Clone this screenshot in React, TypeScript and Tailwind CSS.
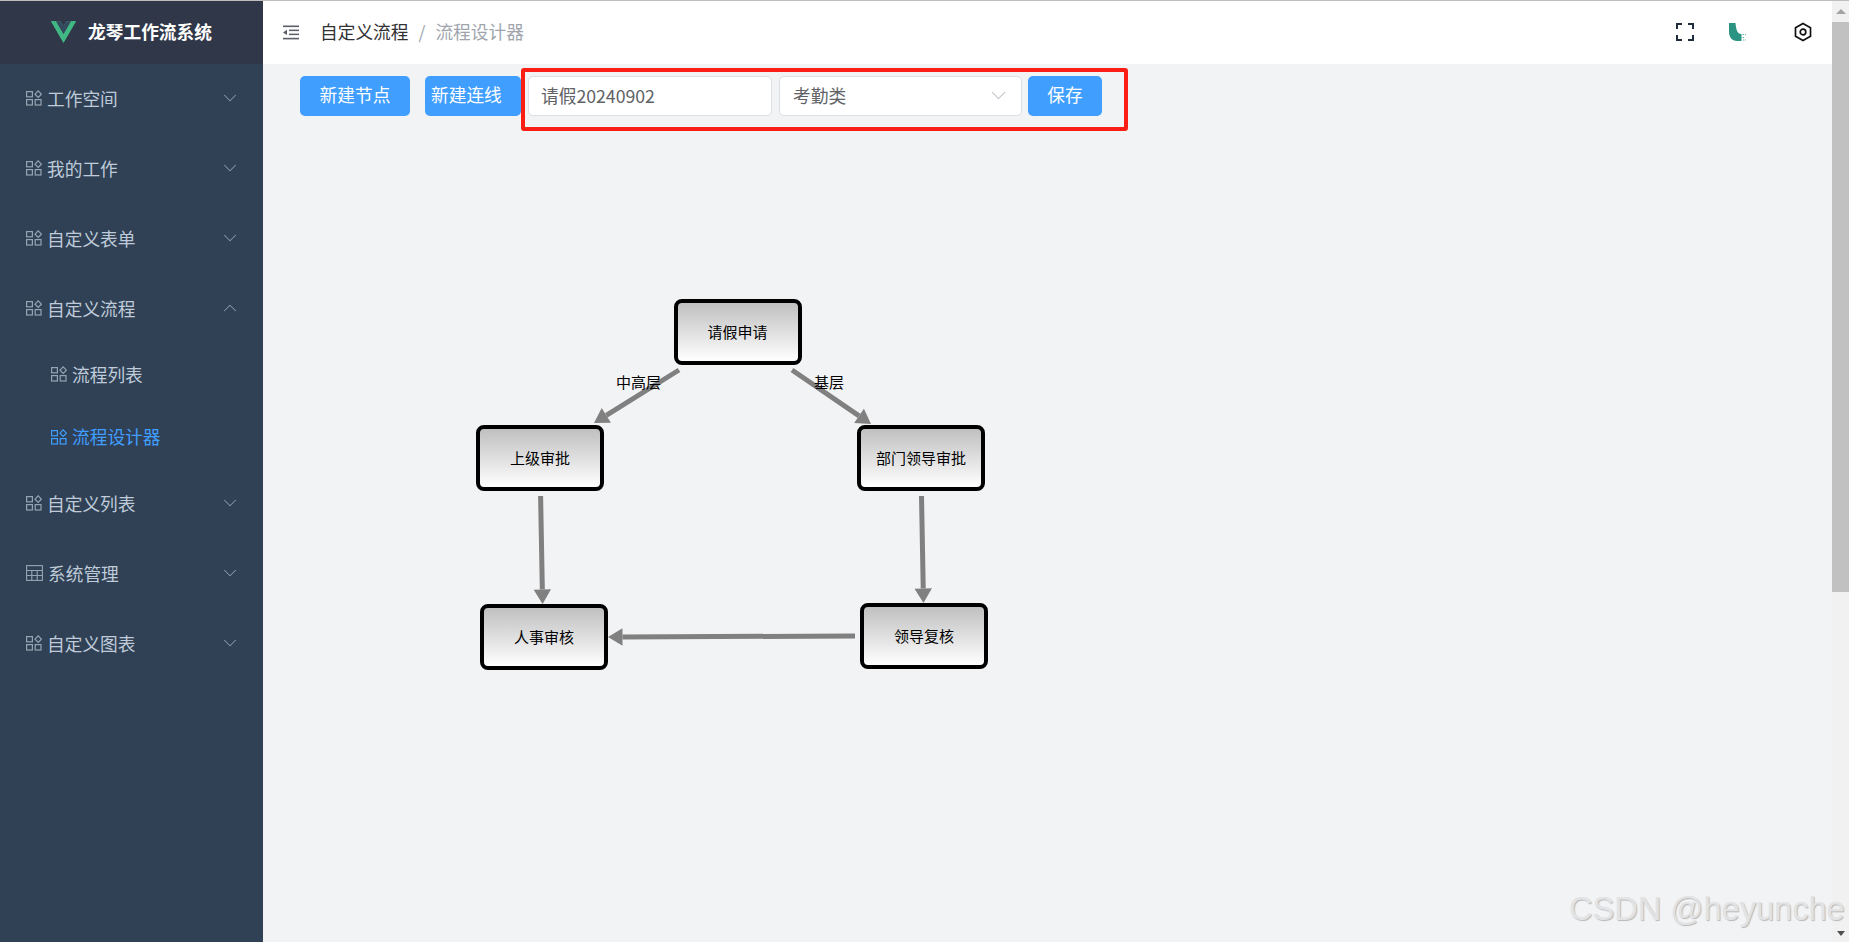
import { ChevronDown, ChevronUp } from "lucide-react";

const FONT = "font-['Microsoft_YaHei','Noto_Sans_CJK_SC','Liberation_Sans',sans-serif]";

function GridIcon({ className }: { className?: string }) {
  return (
    <svg viewBox="0 0 16 16" fill="none" stroke="currentColor" strokeWidth="1.2" className={className}>
      <rect x="0.6" y="1.6" width="5.8" height="5.2" />
      <rect x="0.6" y="9.6" width="5.8" height="5.4" />
      <rect x="9.2" y="9.6" width="5.8" height="5.4" />
      <path d="M12.2 0.8 15.4 4.2 12.2 7.4 9 4.2z" />
    </svg>
  );
}

function TableIcon({ className }: { className?: string }) {
  return (
    <svg viewBox="0 0 17 16" fill="none" stroke="currentColor" strokeWidth="1.1" className={className}>
      <rect x="0.6" y="0.6" width="15.8" height="14.8" />
      <path d="M0.6 5.5H16.4M0.6 10.5H16.4M5.8 5.5V15.4M11.2 5.5V15.4" />
    </svg>
  );
}

function VueLogo() {
  return (
    <svg viewBox="0 0 256 221" className="w-[25px] h-[22px]">
      <path d="M204.8 0H256L128 220.8 0 0h97.92L128 51.2 157.44 0h47.36z" fill="#41b883" />
      <path d="M0 0l128 220.8L256 0h-51.2L128 132.48 50.56 0H0z" fill="#41b883" />
      <path d="M50.56 0L128 133.12 204.8 0h-47.36L128 51.2 97.92 0H50.56z" fill="#35495e" />
    </svg>
  );
}

function MenuRow({ label, open, table }: { label: string; open?: boolean; table?: boolean }) {
  return (
    <div className="h-[70px] flex items-center pl-[26px] pr-[22px] pb-[2px] text-[#bfcbd9] text-[17.7px]">
      {table ? <TableIcon className="w-[17px] h-[16px] text-[#97a4b3]" /> : <GridIcon className="w-[16px] h-[16px] text-[#97a4b3]" />}
      <span className="ml-[5px] flex-1">{label}</span>
      {open ? (
        <ChevronUp className="w-[22px] h-[22px] text-[#8b98a8]" strokeWidth={1.1} />
      ) : (
        <ChevronDown className="w-[22px] h-[22px] text-[#8b98a8]" strokeWidth={1.1} />
      )}
    </div>
  );
}

function SubRow({ label, active }: { label: string; active?: boolean }) {
  return (
    <div className={`h-[62.5px] flex items-center pl-[51px] pb-[2px] text-[17.7px] ${active ? "text-[#409eff]" : "text-[#bfcbd9]"}`}>
      <GridIcon className={`w-[16px] h-[16px] ${active ? "text-[#409eff]" : "text-[#97a4b3]"}`} />
      <span className="ml-[5px]">{label}</span>
    </div>
  );
}

function Sidebar() {
  return (
    <aside className="w-[263px] shrink-0 bg-[#304156] flex flex-col">
      <div className="h-[63px] bg-[#2f3748] flex items-center justify-center gap-[12px] pb-[2px]">
        <VueLogo />
        <span className="text-white font-bold text-[17.7px]">龙琴工作流系统</span>
      </div>
      <MenuRow label="工作空间" />
      <MenuRow label="我的工作" />
      <MenuRow label="自定义表单" />
      <MenuRow label="自定义流程" open />
      <SubRow label="流程列表" />
      <SubRow label="流程设计器" active />
      <MenuRow label="自定义列表" />
      <MenuRow label="系统管理" table />
      <MenuRow label="自定义图表" />
    </aside>
  );
}

function Header() {
  return (
    <header className="h-[63px] shrink-0 bg-white flex items-center pl-[20px] pr-[20px] pb-[1px]">
      <svg viewBox="0 0 16 15" className="w-[16px] h-[15px] text-[#5a5e66]" fill="currentColor">
        <rect x="0" y="0.5" width="16" height="1.6" />
        <rect x="6" y="4.6" width="10" height="1.5" />
        <rect x="6" y="8.6" width="10" height="1.5" />
        <rect x="0" y="12.8" width="16" height="1.6" />
        <path d="M0 7.4 4 4.8V10z" />
      </svg>
      <div className="ml-[21px] flex items-center pb-[1px] text-[17.7px]">
        <span className="text-[#303133]">自定义流程</span>
        <span className="mx-[10px] text-[#a0a5ad]">/</span>
        <span className="text-[#a0a5ad]">流程设计器</span>
      </div>
      <div className="ml-auto flex items-center">
        <svg viewBox="0 0 18 18" className="w-[18px] h-[18px]" fill="none" stroke="#1f2d3d" strokeWidth="2">
          <path d="M1 6V1H6M12 1H17V6M17 12V17H12M6 17H1V12" />
        </svg>
        <svg viewBox="0 0 18 18" className="ml-[35px] w-[18px] h-[18px]">
          <path d="M0 0H6.5Q7 7 9 9.5Q10.5 11 12.5 11V18H8C3 18 0 14 0 9z" fill="#2a9382" />
          <path d="M13.5 11.5H17M13.5 14.5H15.5M14 17H17" stroke="#5fb7a8" strokeWidth="1.2" strokeDasharray="1.5 1" />
        </svg>
        <svg viewBox="0 0 18 20" className="ml-[47px] w-[18px] h-[20px]" fill="none" stroke="#111" strokeWidth="1.7">
          <path d="M9 1.5 16.5 5.7V14.3L9 18.5 1.5 14.3V5.7z" />
          <circle cx="9" cy="10" r="2.8" />
        </svg>
      </div>
    </header>
  );
}

function Arrow({ x1, y1, x2, y2 }: { x1: number; y1: number; x2: number; y2: number }) {
  const len = Math.hypot(x2 - x1, y2 - y1);
  const ux = (x2 - x1) / len;
  const uy = (y2 - y1) / len;
  const bx = x2 - ux * 14.5;
  const by = y2 - uy * 14.5;
  const head = `${x2},${y2} ${bx - uy * 8.7},${by + ux * 8.7} ${bx + uy * 8.7},${by - ux * 8.7}`;
  return (
    <g>
      <line x1={x1} y1={y1} x2={bx} y2={by} stroke="#808080" strokeWidth="5" />
      <polygon points={head} fill="#808080" />
    </g>
  );
}

const nodes = [
  { label: "请假申请", pos: "left-[410.5px] top-[235px]" },
  { label: "上级审批", pos: "left-[213px] top-[361px]" },
  { label: "部门领导审批", pos: "left-[594px] top-[361px]" },
  { label: "人事审核", pos: "left-[217px] top-[540px]" },
  { label: "领导复核", pos: "left-[597px] top-[539px]" },
];

function Canvas() {
  return (
    <>
      <svg className="absolute left-0 top-0 w-[1569px] h-[878px] pointer-events-none">
        <Arrow x1={416} y1={306} x2={331} y2={359} />
        <Arrow x1={529} y1={306} x2={608} y2={360} />
        <Arrow x1={277.6} y1={432} x2={279.6} y2={540} />
        <Arrow x1={658.5} y1={432} x2={660.5} y2={539} />
        <Arrow x1={592} y1={572} x2={345} y2={573} />
      </svg>
      {nodes.map((n) => (
        <div
          key={n.label}
          className={`absolute ${n.pos} w-[128px] h-[66px] border-[4px] border-black rounded-[8px] bg-gradient-to-b from-[#c0c0c0] to-white flex items-center justify-center text-[15px] text-black`}
        >
          {n.label}
        </div>
      ))}
      <span className="absolute left-[353px] top-[308px] text-[15px] leading-[20px] text-black">中高层</span>
      <span className="absolute left-[551px] top-[308px] text-[15px] leading-[20px] text-black">基层</span>
    </>
  );
}

function Toolbar() {
  return (
    <div className="flex items-start pl-[37px] pt-[12px]">
      <button className="w-[110px] h-[40px] bg-[#409eff] text-white rounded-[5px] text-[17.7px] pb-[3px]">新建节点</button>
      <button className="ml-[15px] w-[96px] h-[40px] bg-[#409eff] text-white rounded-[5px] text-[17.7px] pb-[3px] pl-[6px] text-left">新建连线</button>
      <input
        readOnly
        value="请假20240902"
        className="ml-[7px] w-[244px] h-[40px] bg-white border border-[#dcdfe6] rounded-[5px] pl-[12px] pb-[2px] text-[17.7px] text-[#606266] outline-none"
      />
      <div className="ml-[7px] w-[243px] h-[40px] bg-white border border-[#dcdfe6] rounded-[5px] pl-[13px] pr-[10px] pb-[2px] flex items-center justify-between text-[17.7px] text-[#606266]">
        <span>考勤类</span>
        <ChevronDown className="w-[25px] h-[25px] text-[#c0c4cc]" strokeWidth={1} />
      </div>
      <button className="ml-[6px] w-[74px] h-[40px] bg-[#409eff] text-white rounded-[5px] text-[17.7px] pb-[3px]">保存</button>
    </div>
  );
}

function Scrollbar() {
  return (
    <div className="w-[17px] shrink-0 bg-[#f1f1f1] flex flex-col items-center">
      <div className="h-[21px] shrink-0 flex items-center justify-center">
        <div className="w-0 h-0 border-x-[5px] border-x-transparent border-b-[5px] border-b-[#a3a3a3]" />
      </div>
      <div className="w-full h-[570px] bg-[#c1c1c1]" />
      <div className="mt-auto h-[17px] shrink-0 flex items-center justify-center">
        <div className="w-0 h-0 border-x-[4px] border-x-transparent border-t-[5px] border-t-[#505050]" />
      </div>
    </div>
  );
}

export default function App() {
  return (
    <div className={`w-[1849px] h-[942px] overflow-hidden flex flex-col bg-[#f2f3f5] relative ${FONT}`}>
      <div className="h-[1px] shrink-0 bg-[#bdbdbd]" />
      <div className="flex-1 flex min-h-0">
        <Sidebar />
        <div className="flex-1 flex flex-col min-w-0">
          <Header />
          <main className="flex-1 relative">
            <Toolbar />
            <Canvas />
          </main>
        </div>
        <Scrollbar />
      </div>
      {/* annotation drawn over the screenshot */}
      <div className="absolute left-[521px] top-[68px] w-[607px] h-[63px] border-[4px] border-[#fa1e14] rounded-[3px] pointer-events-none" />
      <div className="absolute left-[1569px] top-[889px] font-['Liberation_Sans',sans-serif] text-[32.6px] leading-[40px] whitespace-nowrap text-[#e2e3e5] [text-shadow:1px_1px_1px_#b8b8b8]">
        CSDN @heyunche
      </div>
    </div>
  );
}
